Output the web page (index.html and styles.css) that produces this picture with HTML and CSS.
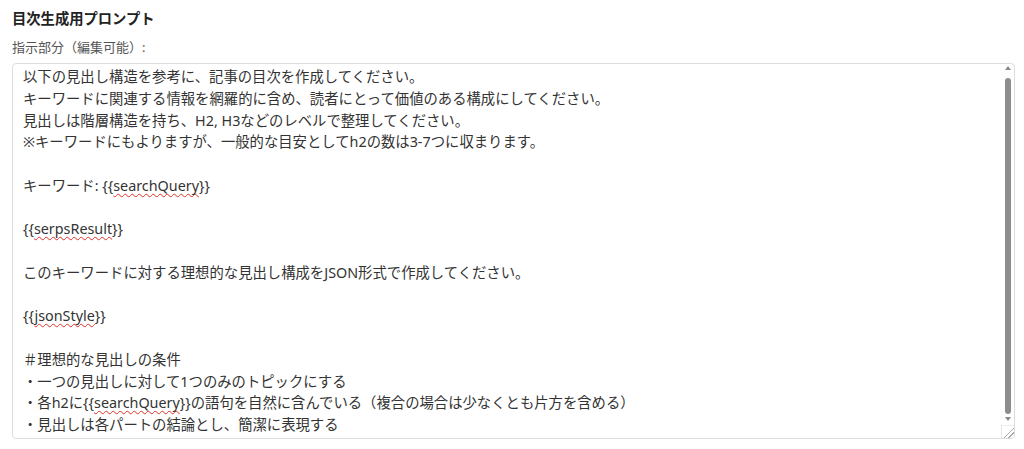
FILE: index.html
```html
<!DOCTYPE html>
<html lang="ja">
<head>
    <meta charset="UTF-8">
    <meta name="viewport" content="width=device-width, initial-scale=1.0">
    <title>目次生成用プロンプト</title>
    <link rel="stylesheet" href="styles.css">
</head>
<body>
    <div class="prompt-section">
        <h3 class="section-title">目次生成用プロンプト</h3>
        <label class="field-label">指示部分（編集可能）:</label>
        <div class="editor-wrap">
            <div class="prompt-editor" contenteditable="true" spellcheck="false">
                <div>以下の見出し構造を参考に、記事の目次を作成してください。</div>
                <div>キーワードに関連する情報を網羅的に含め、読者にとって価値のある構成にしてください。</div>
                <div>見出しは階層構造を持ち、H2, H3などのレベルで整理してください。</div>
                <div>※キーワードにもよりますが、一般的な目安としてh2の数は3-7つに収まります。</div>
                <div><br></div>
                <div>キーワード: {{<span class="misspell">searchQuery</span>}}</div>
                <div><br></div>
                <div>{{<span class="misspell">serpsResult</span>}}</div>
                <div><br></div>
                <div>このキーワードに対する理想的な見出し構成をJSON形式で作成してください。</div>
                <div><br></div>
                <div>{{<span class="misspell">jsonStyle</span>}}</div>
                <div><br></div>
                <div>＃理想的な見出しの条件</div>
                <div>・一つの見出しに対して1つのみのトピックにする</div>
                <div>・各h2に{{<span class="misspell">searchQuery</span>}}の語句を自然に含んでいる（複合の場合は少なくとも片方を含める）</div>
                <div>・見出しは各パートの結論とし、簡潔に表現する</div>
            </div>
            <!-- scrollbar drawn by hand, screenshots hide the native one -->
            <div class="scrollbar" aria-hidden="true">
                <span class="arrow arrow-up"></span>
                <span class="thumb"></span>
                <span class="arrow arrow-down"></span>
                <span class="corner"></span>
            </div>
        </div>
    </div>
</body>
</html>
```

FILE: styles.css
```css
body {
    margin: 0;
    background-color: #fff;
    font-family: "Noto Sans", "Noto Sans CJK JP", sans-serif;
    color: #222;
}

.prompt-section {
    display: flex;
    flex-direction: column;
    padding: 9px 9px 0 12px;
}

.section-title {
    margin: 0 0 9px;
    font-size: 14.3px;
    font-weight: bold;
    line-height: 20px;
    color: #222;
}

.field-label {
    font-size: 13px;
    line-height: 18px;
    color: #555;
    margin-bottom: 7px;
}

.editor-wrap {
    position: relative;
}

.prompt-editor {
    height: 376px;
    box-sizing: border-box;
    border: 1px solid #ddd;
    border-radius: 4px;
    padding: 2px 24px 20px 10px;
    font-size: 14.35px;
    line-height: 21.75px;
    color: #333;
    overflow-y: scroll;
    scrollbar-width: none;
    outline: none;
}

.misspell {
    text-decoration: underline wavy #e0302a;
    text-decoration-thickness: 1px;
    text-decoration-skip-ink: none;
    text-underline-offset: 2px;
}

.scrollbar {
    position: absolute;
    top: 1px;
    right: 1px;
    bottom: 1px;
    width: 12px;
    display: flex;
    flex-direction: column;
    align-items: center;
}

.arrow {
    width: 0;
    height: 0;
    border-left: 3px solid transparent;
    border-right: 3px solid transparent;
}

.arrow-up {
    margin-top: 2px;
    border-bottom: 4px solid #8a8a8a;
}

.arrow-down {
    margin-top: 3px;
    border-top: 4px solid #8a8a8a;
}

.thumb {
    width: 6px;
    height: 336px;
    margin-top: 8px;
    background-color: #8d8d8d;
    border-radius: 3px;
}

.corner {
    align-self: stretch;
    flex: 1;
    margin-top: 4px;
    margin-left: -1px;
    border-left: 1px solid #e6e6e6;
    border-top: 1px solid #eee;
    border-bottom-right-radius: 3px;
    background:
        linear-gradient(135deg, transparent 55%, #aaa 55%, #aaa 62%, transparent 62%, transparent 75%, #aaa 75%, #aaa 82%, transparent 82%);
}
```
